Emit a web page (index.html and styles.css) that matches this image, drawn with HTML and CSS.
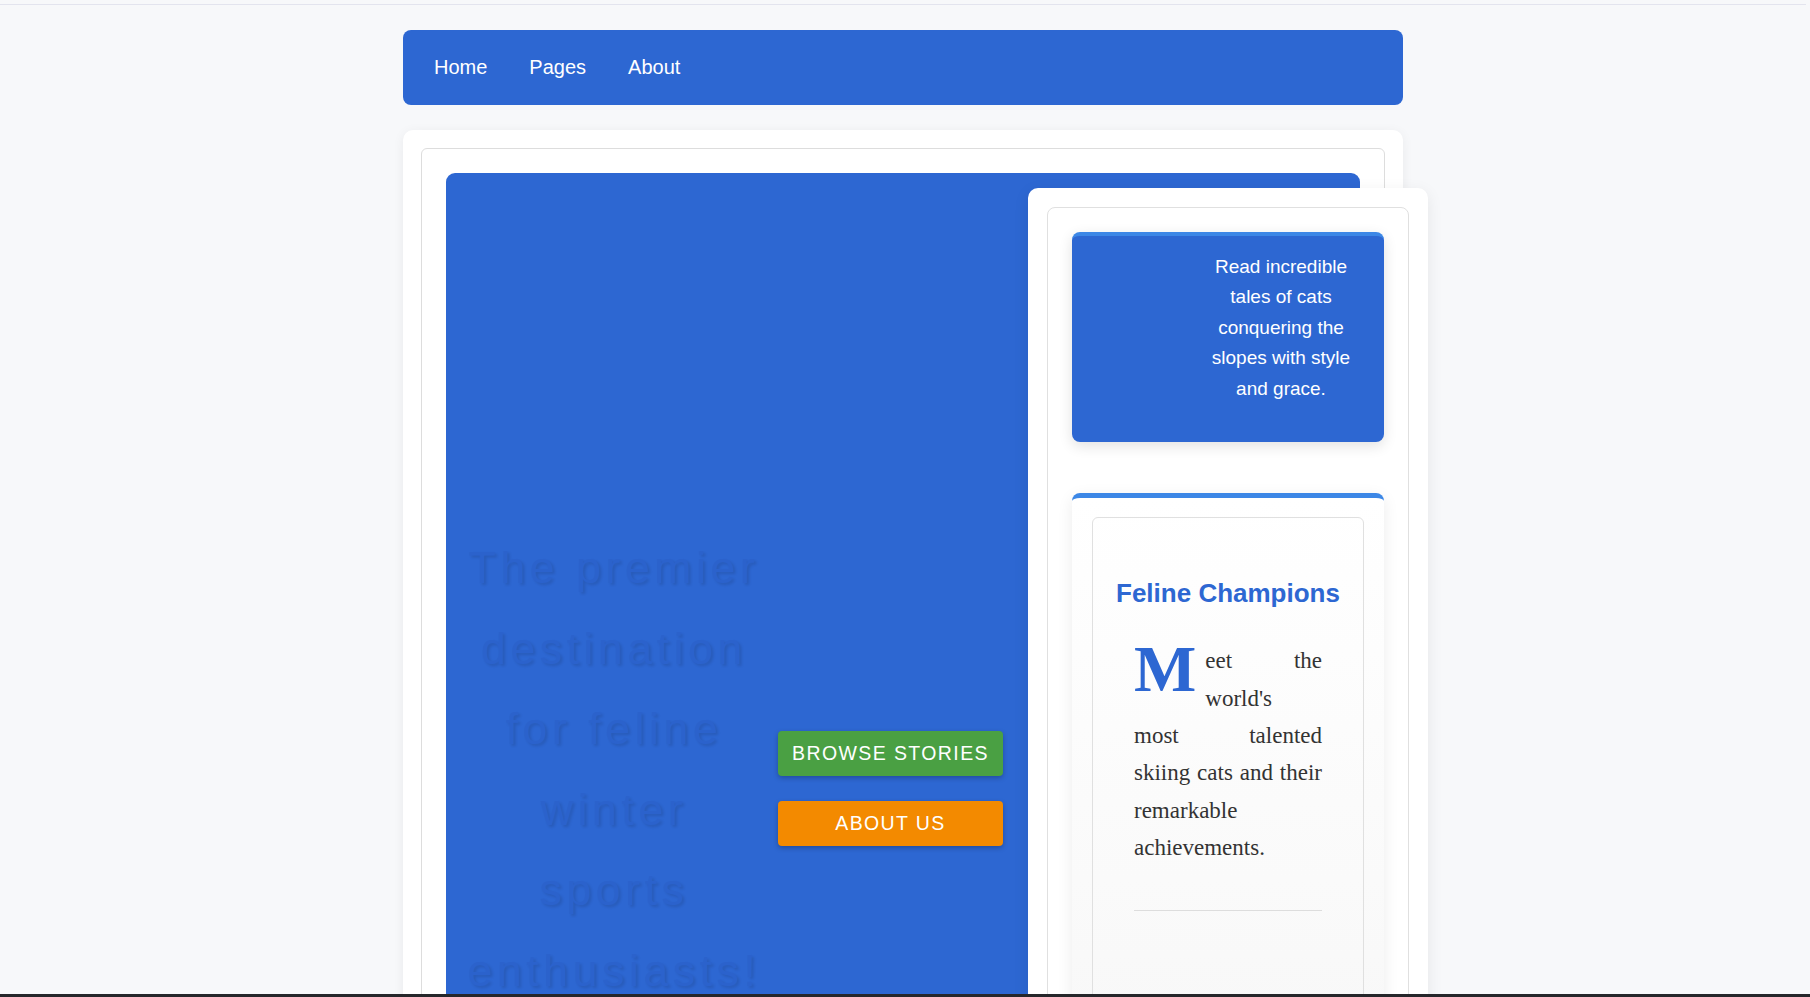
FILE: index.html
```html
<!DOCTYPE html>
<html lang="en">
<head>
<meta charset="utf-8">
<title>Feline Winter Sports</title>
<link rel="stylesheet" href="styles.css">
</head>
<body>
<div class="topline"></div>
<div class="page">
  <nav class="nav">
    <a href="#">Home</a>
    <a href="#">Pages</a>
    <a href="#">About</a>
  </nav>
  <main class="card">
    <div class="card-inner">
      <section class="hero">
        <div class="hero-text">The premier destination for feline winter sports enthusiasts!</div>
        <div class="hero-actions">
          <a href="#" class="btn btn-green">Browse Stories</a>
          <a href="#" class="btn btn-orange">About Us</a>
        </div>
        <aside class="sidebar">
          <div class="sidebar-inner">
            <div class="promo">
              <p>Read incredible tales of cats conquering the slopes with style and grace.</p>
            </div>
            <div class="feature">
              <div class="feature-inner">
                <h2>Feline Champions</h2>
                <p><span class="dropcap">M</span>eet the world's<br>most talented<br>skiing cats and their remarkable achievements.</p>
                <hr>
              </div>
            </div>
          </div>
        </aside>
      </section>
    </div>
  </main>
</div>
<div class="screen-edge"></div>
</body>
</html>
```
FILE: styles.css
```css
* { box-sizing: border-box; }
html, body { margin: 0; }
body {
  background: #f7f8fa;
  font-family: "Liberation Sans", Arial, sans-serif;
  padding-right: 4px;
}
.topline { height: 5px; border-bottom: 1px solid #e3e4ee; }
.page { width: 1000px; margin: 0 auto; }

.nav {
  margin-top: 25px;
  height: 75px;
  background: #2d67d2;
  border-radius: 8px;
  display: flex;
  align-items: center;
  gap: 42px;
  padding: 0 31px;
}
.nav a { color: #fff; text-decoration: none; font-size: 20px; }

.card {
  display: block;
  margin-top: 25px;
  background: #fff;
  border-radius: 10px;
  padding: 18px;
  box-shadow: 0 2px 12px rgba(0,0,0,.06);
}
.card-inner { border: 1px solid #ddd; border-radius: 6px; padding: 24px; }

.hero {
  display: flex;
  align-items: flex-start;
  background: #2d67d2;
  border-radius: 9px;
  padding-left: 18px;
}
.hero-text {
  flex: none;
  width: 300px;
  margin-top: 354px;
  text-align: center;
  font-size: 44.8px;
  line-height: 80.6px;
  letter-spacing: .1em;
  color: #2b62cc;
  text-shadow: 2px 2px 3px rgba(0,0,0,.12);
}
.hero-actions {
  flex: none;
  width: 225px;
  margin: 558px 0 0 14px;
  display: flex;
  flex-direction: column;
  gap: 25px;
}
.btn {
  display: block;
  height: 45px;
  line-height: 45px;
  text-align: center;
  color: #fff;
  text-transform: uppercase;
  font-size: 19.5px;
  letter-spacing: 1.4px;
  border-radius: 4px;
  box-shadow: 0 2px 5px rgba(0,0,0,.25);
  text-decoration: none;
}
.btn-green { background: #4aa043; }
.btn-orange { background: #f38a00; }

.sidebar {
  flex: none;
  width: 400px;
  margin: 15px -68px 0 25px;
  background: #fff;
  border-radius: 10px;
  padding: 19px;
  box-shadow: 0 4px 16px rgba(0,0,0,.08);
}
.sidebar-inner {
  border: 1px solid #e0e0e0;
  border-radius: 8px;
  padding: 24px;
  display: flex;
  flex-direction: column;
  gap: 51px;
}
.promo {
  background: #2d67d2;
  border-top: 4px solid #3c87e6;
  border-radius: 8px;
  padding: 16px 28px 38px;
  box-shadow: 0 4px 14px rgba(0,0,0,.12);
  color: #fff;
  font-size: 19px;
  line-height: 30.4px;
}
.promo p { margin: 0 0 0 auto; width: 150px; text-align: center; }

.feature {
  background: linear-gradient(#fff, #f8f8f8);
  border-top: 5px solid #3c87e6;
  border-radius: 8px;
  padding: 19px 20px;
  box-shadow: 0 4px 16px rgba(0,0,0,.08);
}
.feature-inner {
  border: 1px solid #e0e0e0;
  border-radius: 6px;
  padding: 60px 16px 100px;
}
.feature h2 {
  margin: 0 0 33px;
  text-align: center;
  color: #2d67d2;
  font-size: 26px;
  line-height: 31.2px;
  font-weight: bold;
  white-space: nowrap;
}
.feature p {
  margin: 0 25px;
  font-family: "Liberation Serif", "Times New Roman", serif;
  font-size: 23px;
  line-height: 37.4px;
  color: #333;
  text-align: justify;
  text-align-last: justify;
}
.dropcap {
  float: left;
  font-size: 66px;
  line-height: .82;
  font-weight: bold;
  color: #2d67d2;
  margin-right: 9px;
}
.feature hr { margin: 43px 25px 0; border: 0; border-top: 1px solid #ddd; }

.screen-edge {
  position: fixed;
  left: 0;
  right: 0;
  bottom: 0;
  height: 3px;
  background: #26272b;
}
```
